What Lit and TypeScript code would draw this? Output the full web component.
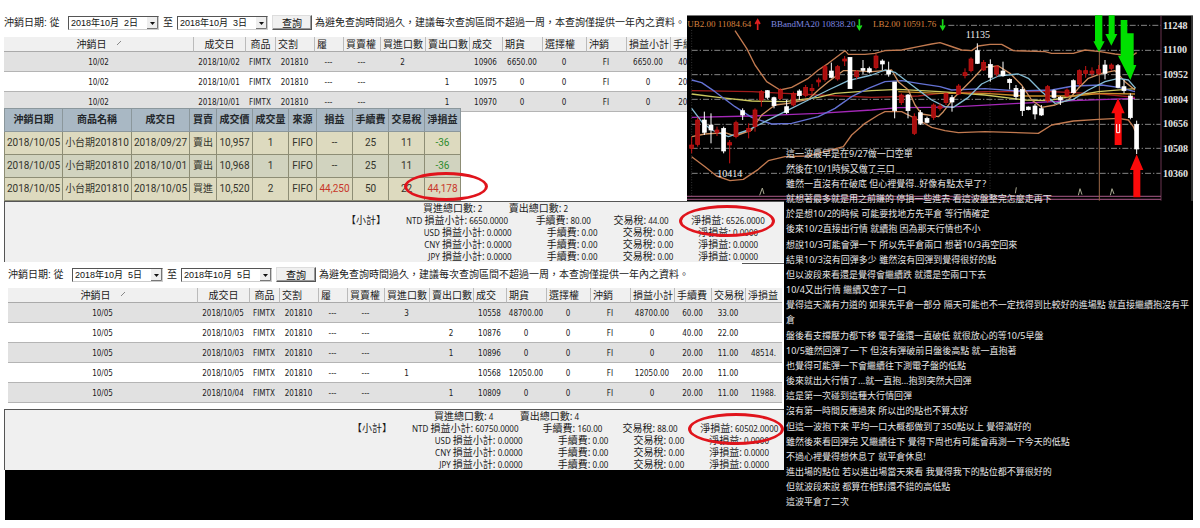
import { LitElement, html, svg, css, nothing } from "lit";
import { customElement, property } from "lit/decorators.js";

const DEAL_HEADS = ["沖銷日", "成交日", "商品", "交割", "履", "買賣權", "買進口數", "賣出口數", "成交", "期貨", "選擇權", "沖銷", "損益小計", "手續費", "交易稅", "淨損益"];
const DEAL_WIDTHS = [189, 52, 30, 39, 29, 37, 45, 44, 33, 40, 44, 40, 44, 37, 34, 37];

const deal = (close: string, day: string, buy: string, sell: string, price: string, gain: string, fee: string, tax: string, net = "") =>
  [close, day, "FIMTX", "201810", "---", "---", buy, sell, price, gain, "0", "FI", gain, fee, tax, net];

const DEALS_A = [
  deal("10/02", "2018/10/02", "2", "", "10906", "6650.00", "40.00", "22.00"),
  deal("10/02", "2018/10/01", "", "1", "10975", "0", "20.00", "11.00"),
  deal("10/02", "2018/10/01", "", "1", "10970", "0", "20.00", "11.00"),
];
const DEALS_B = [
  deal("10/05", "2018/10/05", "3", "", "10558", "48700.00", "60.00", "33.00"),
  deal("10/05", "2018/10/03", "", "2", "10876", "0", "40.00", "22.00"),
  deal("10/05", "2018/10/03", "", "1", "10896", "0", "20.00", "11.00", "48514."),
  deal("10/05", "2018/10/05", "1", "", "10568", "12050.00", "20.00", "11.00"),
  deal("10/05", "2018/10/04", "", "1", "10809", "0", "20.00", "11.00", "11988."),
];

@customElement("query-bar")
class QueryBar extends LitElement {
  @property() from = "";
  @property() to = "";
  static styles = css`
    :host { display: flex; align-items: center; height: 15px; font: 10px/15px "Liberation Sans", "Noto Sans CJK TC", sans-serif; color: #222; white-space: nowrap; }
    .from { width: 64px; flex: none; }
    .to { width: 18px; text-align: center; flex: none; }
    .combo { position: relative; flex: none; width: 91px; height: 14px; }
    select { appearance: none; box-sizing: border-box; width: 100%; height: 14px; margin: 0; padding: 0 14px 0 2px; border: 1px solid; border-color: #555 #ccc #ccc #555; border-radius: 0; background: #fff; color: #111; font: 9px/12px "Liberation Sans", "Noto Sans CJK TC", sans-serif; display: block; }
    .drop { position: absolute; right: 1px; top: 1px; width: 11px; height: 12px; pointer-events: none; }
    button { flex: none; width: 40px; height: 15px; margin: 0 3px 0 4px; padding: 0; border: 1px solid; border-color: #ddd #555 #555 #ddd; box-shadow: inset -1px -1px #999; background: #f0f0f0; color: #111; font: 10px/12px "Noto Sans CJK TC", sans-serif; }
  `;
  private combo(id: string, value: string) {
    return html`<span class="combo">
      <select id=${id}><option>${value}</option></select>
      <svg class="drop" viewBox="0 0 11 12" aria-hidden="true"><path d="M0 0h11v12H0z" fill="#eee"/><path d="M0 11.5h10.5V0" fill="none" stroke="#777"/><path d="M3 5h5L5.500 8z" fill="#111"/></svg>
    </span>`;
  }
  render() {
    return html`<label class="from" for="from">沖銷日期: 從</label>${this.combo("from", this.from)}
      <label class="to" for="to">至</label>${this.combo("to", this.to)}
      <button type="button">查詢</button>
      <span>為避免查詢時間過久，建議每次查詢區間不超過一周，本查詢僅提供一年內之資料。</span>`;
  }
}

@customElement("deal-table")
class DealTable extends LitElement {
  @property({ attribute: false }) rows: string[][] = [];
  @property({ type: Number }) columns = 16;
  static styles = css`
    :host { display: block; overflow: hidden; }
    table { table-layout: fixed; border-collapse: separate; border-spacing: 0; color: #1a1a1a; }
    th, td { box-sizing: border-box; padding: 0; white-space: nowrap; overflow: hidden; }
    th { height: 15px; background: #f0f0f0; border-bottom: 1px solid #aaa; font: 10px/14px "Noto Sans CJK TC", sans-serif; text-align: left; padding-left: 2px; border-left: 1px solid #bbb; }
    th:nth-child(-n + 3) { text-align: center; padding-left: 0; }
    th:first-child { border-left: 0; }
    td { height: 20px; padding-top: 2px; border-bottom: 1px solid #b4b4b4; font: 8px/17px "DejaVu Sans Condensed", "Noto Sans", sans-serif; text-align: center; }
    tbody tr:nth-child(odd) { background: #e1e1e1; }
    .sort { width: 4px; height: 4px; margin-left: 10px; vertical-align: 3px; }
  `;
  render() {
    const widths = DEAL_WIDTHS.slice(0, this.columns);
    return html`<table style="width:${widths.reduce((a, b) => a + b, 0)}px">
      <colgroup>${widths.map((w) => html`<col style="width:${w}px">`)}</colgroup>
      <thead><tr>${DEAL_HEADS.slice(0, this.columns).map((h, i) => html`<th scope="col">${h}${i === 0
        ? html`<svg class="sort" viewBox="0 0 4 4" aria-hidden="true"><path d="M0 4 4 0" stroke="#888"/></svg>` : nothing}</th>`)}</tr></thead>
      <tbody>${this.rows.map((r) => html`<tr>${r.slice(0, this.columns).map((c) => html`<td>${c}</td>`)}</tr>`)}</tbody>
    </table>`;
  }
}

const FIFO_WIDTHS = [58, 69, 58, 27, 36, 36, 28, 36, 36, 36, 36];
const FIFO_HEADS = ["沖銷日期", "商品名稱", "成交日", "買賣", "成交價", "成交量", "來源", "損益", "手續費", "交易稅", "淨損益"];
const FIFO_ROWS = [
  ["2018/10/05", "小台期201810", "2018/09/27", "賣出", "10,957", "1", "FIFO", "--", "25", "11", "-36"],
  ["2018/10/05", "小台期201810", "2018/10/01", "賣出", "10,968", "1", "FIFO", "--", "25", "11", "-36"],
  ["2018/10/05", "小台期201810", "2018/10/05", "買進", "10,520", "2", "FIFO", "44,250", "50", "22", "44,178"],
];

@customElement("fifo-table")
class FifoTable extends LitElement {
  static styles = css`
    :host { display: block; }
    table { width: 456px; table-layout: fixed; border-collapse: collapse; color: #33332b; font: 10px/22px Roboto, "Noto Sans CJK TC", sans-serif; }
    th, td { box-sizing: border-box; height: 23px; padding: 0; border: 1px solid #8d8d75; text-align: center; white-space: nowrap; }
    th { background: #a9b8c4; border-color: #8b979c; font-weight: 700; color: #22262a; }
    td { background: #dddabf; }
    tr:nth-child(2) td { background: #d1d3bf; }
    td.up { color: #c8372a; }
    td.down { color: #2e8b2e; }
    .last { position: relative; }
    .ring { position: absolute; left: -21px; top: -6px; width: 84px; height: 29px; box-sizing: border-box; border: 3px solid #e0141c; border-radius: 50%; pointer-events: none; }
  `;
  render() {
    const tone = (c: string) => (c.startsWith("44,") ? "up" : c === "-36" ? "down" : "");
    return html`<table>
      <colgroup>${FIFO_WIDTHS.map((w) => html`<col style="width:${w}px">`)}</colgroup>
      <thead><tr>${FIFO_HEADS.map((h) => html`<th scope="col">${h}</th>`)}</tr></thead>
      <tbody>${FIFO_ROWS.map((r) => html`<tr>${r.map((c) => html`<td class="${tone(c)} ${c === "44,178" ? "last" : ""}">${c}${c === "44,178" ? html`<span class="ring"></span>` : nothing}</td>`)}</tr>`)}</tbody>
    </table>`;
  }
}

@customElement("sub-total")
class SubTotal extends LitElement {
  @property() lots = "";
  @property({ attribute: false }) ntd: string[] = [];
  static styles = css`
    :host { display: block; box-sizing: border-box; background: #f0f0f0; border-top: 1px solid #555; border-left: 1px solid #555; color: #1a1a1a; font: 8px/12px "Noto Sans", "Noto Sans CJK TC", sans-serif; white-space: nowrap; }
    .line { display: grid; height: 12px; }
    .line > * { min-width: 0; }
    .lots { grid-template-columns: 419fr 86fr 276fr; }
    .ntd { grid-template-columns: 342fr 60fr 130fr 78fr 78fr 93fr; }
    .zero { grid-template-columns: 508fr 86fr 76fr 85fr 26fr; text-align: right; }
    :host([late]) .lots { grid-template-columns: 430fr 86fr 265fr; }
    :host([late]) .ntd { grid-template-columns: 348fr 60fr 131fr 80fr 78fr 84fr; }
    :host([late]) .zero { grid-template-columns: 519fr 86fr 76fr 85fr 15fr; }
    .k { font-size: 10px; }
    .net { position: relative; }
    .ring { position: absolute; left: -12px; top: -9px; width: 96px; height: 32px; box-sizing: border-box; border: 3px solid #e0141c; border-radius: 50%; pointer-events: none; }
  `;
  render() {
    const k = (t: string) => html`<span class="k">${t}:</span>`;
    const n = this.ntd;
    return html`
      <div class="line lots"><span></span><span>${k("買進總口數")} ${this.lots}</span><span>${k("賣出總口數")} ${this.lots}</span></div>
      <div class="line ntd"><span></span><span class="k">【小計】</span><span>NTD ${k("損益小計")} ${n[0]}</span><span>${k("手續費")} ${n[1]}</span><span>${k("交易稅")} ${n[2]}</span><span class="net">${k("淨損益")} ${n[3]}<span class="ring"></span></span></div>
      ${["USD", "CNY", "JPY"].map((c) => html`<div class="line zero"><span>${c} ${k("損益小計")} 0.0000</span><span>${k("手續費")} 0.00</span><span>${k("交易稅")} 0.00</span><span>${k("淨損益")} 0.0000</span></div>`)}`;
  }
}

/* Candles: colour, x, body top, body bottom, wick top, wick bottom (plot units, three per pixel). */
const CANDLES: [string, number, number, number, number, number][] = [
  ["r", 20, 405, 415, 380, 430], ["r", 38, 330, 403, 322, 410], ["w", 58, 330, 367, 305, 375], ["w", 78, 345, 360, 310, 400],
  ["r", 96, 360, 368, 350, 378], ["w", 116, 355, 423, 350, 430], ["r", 134, 398, 405, 390, 460], ["r", 153, 338, 380, 332, 385],
  ["w", 173, 302, 315, 295, 330], ["r", 191, 355, 365, 340, 385], ["r", 210, 300, 350, 295, 365], ["r", 229, 245, 270, 240, 290],
  ["w", 247, 242, 262, 240, 268], ["w", 267, 263, 287, 260, 295], ["r", 286, 240, 265, 235, 270], ["w", 305, 290, 308, 270, 312],
  ["r", 325, 250, 285, 245, 290], ["w", 343, 243, 257, 238, 270], ["r", 362, 232, 256, 225, 262], ["r", 381, 235, 242, 222, 255],
  ["r", 401, 210, 216, 203, 230], ["r", 420, 170, 208, 165, 215], ["w", 439, 183, 202, 158, 205], ["r", 458, 170, 207, 165, 212],
  ["r", 479, 147, 153, 138, 168], ["w", 495, 142, 236, 142, 236], ["r", 515, 185, 200, 180, 207], ["w", 534, 175, 181, 150, 192],
  ["w", 553, 176, 186, 170, 190], ["r", 573, 138, 173, 132, 178], ["w", 592, 153, 162, 148, 180], ["w", 611, 182, 192, 155, 200],
  ["w", 629, 216, 302, 216, 325], ["r", 649, 255, 278, 250, 285], ["w", 669, 255, 302, 252, 325], ["r", 688, 320, 370, 310, 375],
  ["w", 706, 308, 340, 300, 345], ["w", 726, 325, 337, 320, 340], ["r", 746, 285, 322, 280, 330], ["r", 765, 288, 295, 280, 302],
  ["r", 783, 250, 278, 248, 285], ["w", 801, 263, 276, 255, 305], ["r", 821, 228, 252, 222, 255], ["r", 840, 188, 197, 175, 205],
  ["r", 858, 147, 182, 142, 187], ["w", 877, 122, 160, 100, 162], ["r", 896, 157, 180, 150, 183], ["w", 916, 163, 202, 148, 215],
  ["r", 935, 170, 192, 165, 200], ["w", 954, 183, 197, 155, 200], ["w", 974, 208, 218, 205, 238], ["w", 993, 235, 260, 225, 270],
  ["w", 1012, 238, 302, 230, 318], ["w", 1030, 291, 299, 289, 301], ["w", 1050, 288, 312, 282, 328], ["w", 1069, 296, 315, 285, 318],
  ["r", 1088, 230, 272, 225, 278], ["w", 1107, 242, 262, 238, 266], ["w", 1126, 262, 270, 258, 285], ["r", 1146, 240, 258, 235, 262],
  ["w", 1165, 212, 248, 208, 250], ["r", 1183, 182, 222, 178, 228], ["r", 1202, 182, 190, 168, 203], ["r", 1221, 183, 190, 172, 198],
  ["r", 1241, 178, 190, 165, 195], ["w", 1260, 165, 190, 150, 208], ["r", 1279, 165, 175, 160, 182], ["w", 1299, 167, 232, 162, 235],
  ["w", 1317, 230, 242, 210, 250], ["w", 1336, 258, 323, 250, 328], ["w", 1355, 343, 417, 332, 432],
];

const CURVES: [string, string][] = [
  ["#c27a50", "150,62 185,115 210,165 245,215 285,240 320,232 370,205 400,180 430,160 480,122 490,133 540,133 570,130 600,122 650,120 700,110 740,102 765,98 795,108 830,120 860,122 880,108 915,103 950,103 985,122 1080,125 1100,130 1165,130 1200,120 1245,125 1290,132 1340,138 1355,128"],
  ["#c27a50", "20,440 60,470 95,498 135,512 175,508 220,478 250,452 300,440 370,438 475,410 500,375 540,340 580,315 600,305 650,305 700,330 740,352 780,362 820,368 900,365 1060,370 1100,345 1165,333 1240,328 1300,325 1330,330 1345,350 1350,362"],
  ["#a01c1c", "20,242 200,245 300,250 400,255 560,262 700,258 765,250 900,245 1100,245 1250,252 1350,262"],
  ["#ccc860", "20,252 100,262 200,273 300,275 400,262 450,250 560,242 640,238 765,245 900,255 1020,270 1090,272 1165,258 1240,245 1350,236"],
  ["#c88a28", "640,245 765,250 900,250 1020,258 1165,258 1250,250 1350,252"],
  ["#a428b8", "20,322 200,318 400,310 560,300 640,293 740,292 820,290 1000,280 1165,272 1350,265"],
  ["#6472d4", "20,210 50,218 90,245 150,290 200,322 260,342 320,340 400,320 450,295 500,260 550,235 600,215 650,212 700,220 765,230 800,240 900,236 1000,243 1100,240 1165,228 1250,225 1300,232 1350,245"],
  ["#cf9160", "20,380 60,372 120,368 150,378 200,360 230,315 270,285 310,280 370,268 400,240 430,215 475,182 500,182 560,185 620,180 640,215 670,240 690,285 710,312 760,320 775,305 810,260 860,210 895,172 940,168 975,190 1010,225 1040,270 1070,292 1110,285 1150,270 1180,235 1210,205 1250,190 1290,182 1320,215 1350,240"],
  ["#84bcd4", "20,295 50,335 80,360 130,380 190,360 240,335 300,305 370,270 430,240 490,212 560,195 600,180 630,187 680,225 740,270 780,290 805,292 850,262 890,222 940,198 1000,192 1030,205 1070,245 1110,280 1165,268 1210,240 1260,215 1300,205 1330,210 1352,235"],
];

@customElement("price-chart")
class PriceChart extends LitElement {
  static styles = css`
    :host { display: block; background: #000; }
    svg { display: block; width: 100%; }
    text { font-family: "Liberation Serif", serif; }
    .head { font-size: 27px; }
    .axis { font-size: 30px; font-weight: 700; fill: #e4e4e4; }
    .mark { font-size: 30px; fill: #eee; }
  `;
  render() {
    return html`<svg viewBox="6 15 1518 558" role="img" aria-label="K線圖">
      <path d="M6 16.500H1524" stroke="#777" stroke-width="3"/>
      ${[46, 121, 194, 268, 343, 415, 490].map((y, i) => svg`<path d="M${i ? 20 : 790} ${y}H1428" stroke="#858585" stroke-width="3" stroke-dasharray="18 6 4 6"/>`)}
      <path d="M20 60V560M915 150V560" stroke="#333" stroke-width="3" stroke-dasharray="3 5"/>
      <path d="M1428 18V572" stroke="#6a3450" stroke-width="3"/>
      <path d="M6 559H1428M6 568H1428" stroke="#87486c" stroke-width="4"/>
      <path d="M1243 120V572" stroke="#9a6848" stroke-width="3"/>
      ${CURVES.map(([c, p]) => svg`<polyline points=${p} fill="none" stroke=${c} stroke-width="4" stroke-linejoin="round"/>`)}
      ${CANDLES.map(([k, x, t, b, wt, wb]) => {
        const c = k === "r" ? "#c81414" : "#fff";
        return svg`<path d="M${x} ${wt}V${wb}" stroke=${c} stroke-width="3"/><rect x=${x - 6} y=${t} width="12" height=${b - t} fill=${k === "r" ? "#a80e0e" : "#fff"} stroke=${c} stroke-width="2"/>`;
      })}
      <path d="M224 556l8-22 5 18M991 550l3-18M1180 556l5-20 6 18M1276 556l5-20 6 16" fill="none" stroke="#a8a890" stroke-width="3"/>
      <path d="M1230 16h22v78h7l-17 32-17-32h5zM1271 16h18v56h8l-18 35-18-35h10zM1307 30h20v40h19v95h8l-18 45-37-73h8z" fill="#00e000"/>
      <path d="M1299 265l20 45h-9v95h-21v-95h-10zM1355 433l20 47h-9v82h-21v-82h-10z" fill="#fb0a0a"/>
      <path d="M1295 342v26h9v-26" fill="none" stroke="#fff" stroke-width="3"/>
      <path d="M218 60V32M211 42l7-12 7 12" fill="none" stroke="#e02020" stroke-width="5"/>
      <path d="M523 28v28M516 46l7 12 7-12M773 28v28M766 46l7 12 7-12" fill="none" stroke="#18d818" stroke-width="5"/>
      <text class="head" x="7" y="52" fill="#d8823f">UB2.00 11084.64</text>
      <text class="head" x="258" y="52" fill="#7f88e0">BBandMA20 10838.20</text>
      <text class="head" x="564" y="52" fill="#d8823f">LB2.00 10591.76</text>
      <text class="mark" x="97" y="500">10414</text>
      <text class="mark" x="842" y="84">11135</text>
      ${[11248, 11100, 10952, 10804, 10656, 10508, 10360].map((v, i) => svg`<text class="axis" x="1434" y=${56 + i * 74}>${v}</text>`)}
      <path d="M1521 18V573" stroke="#666" stroke-width="3"/>
    </svg>`;
  }
}

const NOTES = [
  ["這一波最早是在9/27做一口空單", "然後在10/1時候又做了三口", "雖然一直沒有在破底 但心裡覺得..好像有點太早了?", "就想著最多就是用之前賺的 停損一些進去 看這波盤整完怎麼走再下", "於是想10/2的時候 可能要找地方先平倉 等行情確定", "後來10/2直接出行情 就續抱 因為那天行情也不小"],
  ["想說10/3可能會彈一下 所以先平倉兩口 想著10/3再空回來", "結果10/3沒有回彈多少 雖然沒有回彈到覺得很好的點", "但以波段來看還是覺得會繼續跌 就還是空兩口下去", "10/4又出行情 繼續又空了一口", "覺得這天滿有力道的 如果先平倉一部分 隔天可能也不一定找得到比較好的進場點 就直接繼續抱沒有平", "倉"],
  ["盤後看支撐壓力都下移 電子盤還一直破低 就很放心的等10/5早盤", "10/5雖然回彈了一下 但沒有彈破前日盤後高點 就一直抱著", "也覺得可能彈一下會繼續往下測電子盤的低點", "後來就出大行情了...就一直抱...抱到突然大回彈", "這是第一次碰到這種大行情回彈", "沒有第一時間反應過來 所以出的點也不算太好"],
  ["但這一波抱下來 平均一口大概都做到了350點以上 覺得滿好的", "雖然後來看回彈完 又繼續往下 覺得下周也有可能會再測一下今天的低點", "不過心裡覺得想休息了 就平倉休息!", "進出場的點位 若以進出場當天來看 我覺得我下的點位都不算很好的", "但就波段來說 都算在相對還不錯的高低點", "這波平倉了二次"],
];

@customElement("app-root")
class AppRoot extends LitElement {
  static styles = css`
    :host { display: block; background: #fff; }
    .page { display: grid; grid-template-columns: minmax(0, 683fr) minmax(0, 97fr) minmax(0, 409fr); margin: 0 7px 8px 4px; }
    .first { grid-area: 1 / 1; padding-top: 15px; }
    .second { grid-area: 2 / 1 / 3 / 3; }
    .chart { grid-area: 1 / 2 / 2 / 4; margin-top: 15px; }
    .ink { grid-area: 2 / 3; background: #000; }
    .notes { grid-area: 1 / 3 / 4 / 4; z-index: 1; padding: 146px 0 0 2px; display: flex; flex-direction: column; gap: 1px; color: #e6e6e6; font: 9px/15px "Noto Sans", "Noto Sans CJK TC", sans-serif; white-space: nowrap; }
    .notes p { margin: 0; }
    .base { grid-area: 3 / 1 / 4 / 4; height: 50px; margin-left: 1px; background: #000; }
    deal-table { margin-top: 7px; }
    fifo-table { position: relative; z-index: 1; margin-top: -4px; }
    .rule { width: 42px; height: 1px; margin: 1px 0 3px auto; background: #555; }
    .inset { margin-left: 4px; }
    .inset deal-table { margin-top: 6px; }
    .after { margin-top: 6px; }
  `;
  render() {
    return html`<main class="page">
      <section class="first">
        <query-bar from="2018年10月&nbsp; 2日" to="2018年10月&nbsp; 3日"></query-bar>
        <deal-table columns="14" .rows=${DEALS_A}></deal-table>
        <fifo-table></fifo-table>
      </section>
      <section class="second">
        <sub-total lots="2" .ntd=${["6650.0000", "80.00", "44.00", "6526.0000"]}></sub-total>
        <div class="rule"></div>
        <div class="inset">
          <query-bar from="2018年10月&nbsp; 5日" to="2018年10月&nbsp; 5日"></query-bar>
          <deal-table .rows=${DEALS_B}></deal-table>
        </div>
        <sub-total class="after" late lots="4" .ntd=${["60750.0000", "160.00", "88.00", "60502.0000"]}></sub-total>
      </section>
      <price-chart class="chart"></price-chart>
      <div class="ink"></div>
      <article class="notes">${NOTES.map((g) => html`<p>${g.map((l, i) => html`${i ? html`<br>` : nothing}${l}`)}</p>`)}</article>
      <div class="base"></div>
    </main>`;
  }
}
